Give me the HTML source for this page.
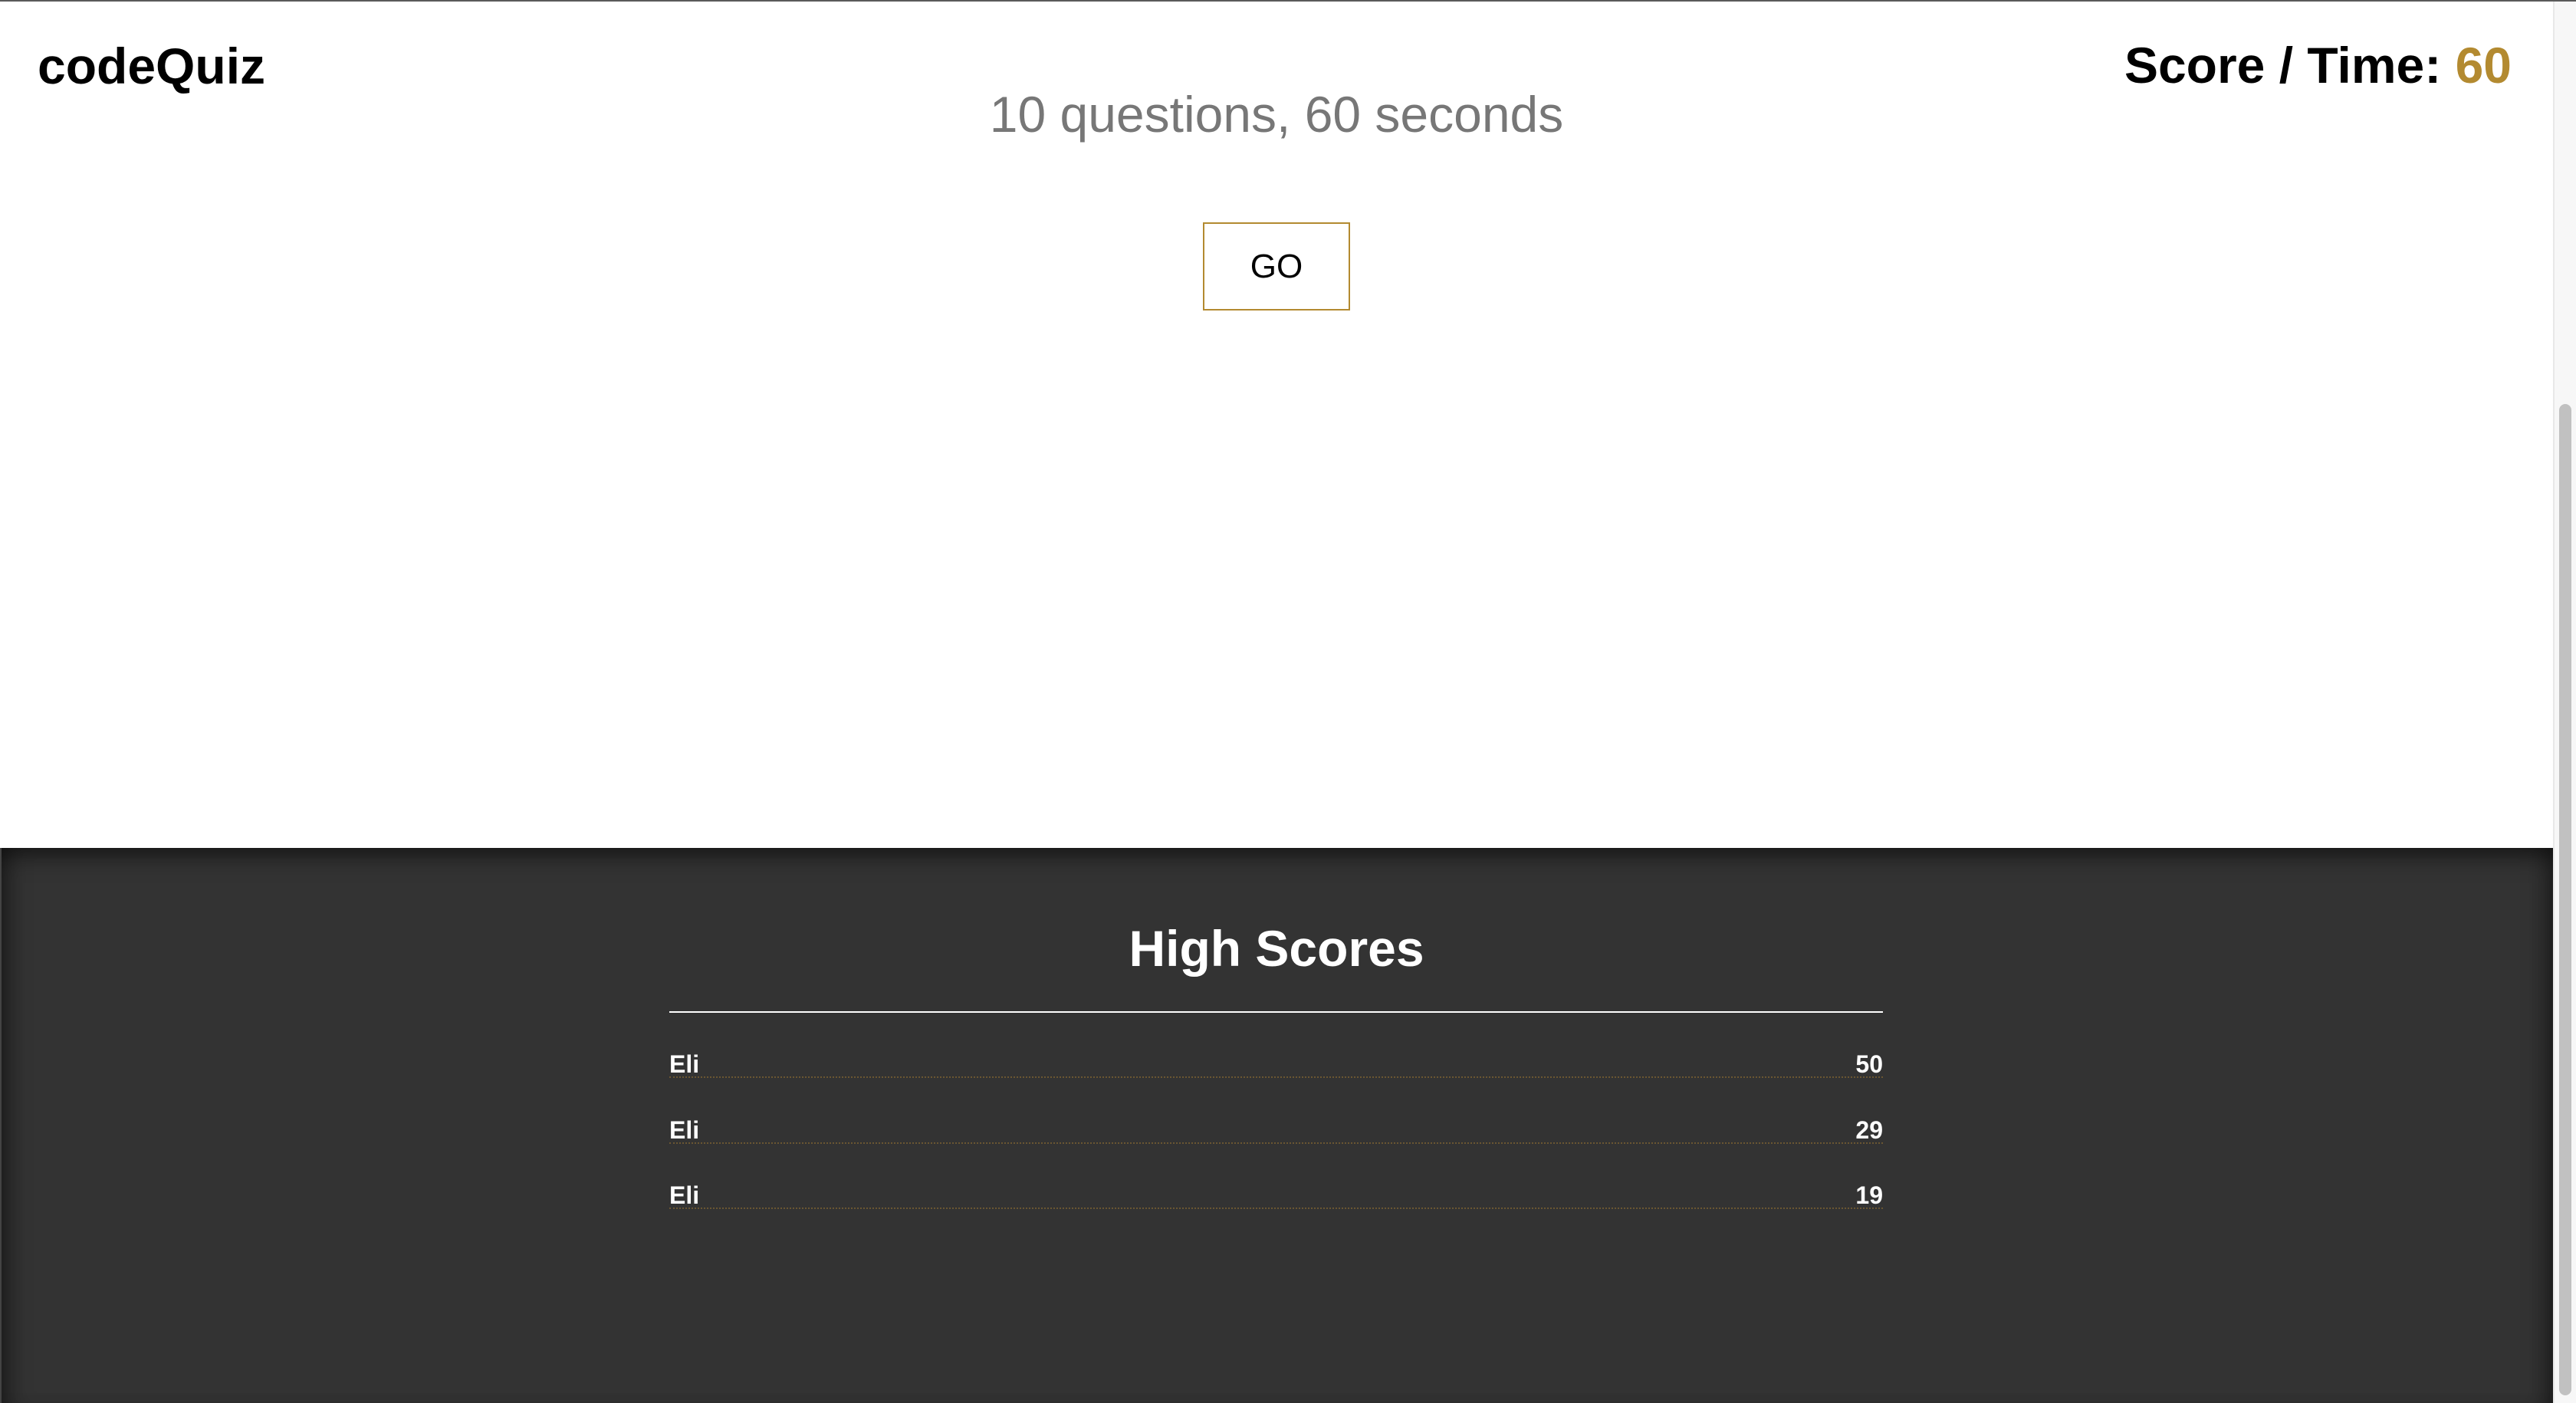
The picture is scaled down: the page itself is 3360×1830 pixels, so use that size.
<!DOCTYPE html>
<html><head><meta charset="utf-8"><style>
*{margin:0;padding:0;box-sizing:border-box}
html,body{width:3360px;height:1830px;overflow:hidden;background:#fff;font-family:"Liberation Sans",Arial,sans-serif}
.t{position:absolute;white-space:nowrap;line-height:1}
#topline{position:absolute;left:0;top:0;width:3360px;height:2px;background:#5a5a5a}
#sb{position:absolute;left:3330px;top:2px;width:30px;height:1828px;background:#f7f7f7;border-left:2px solid #e8e8e8}
#thumb{position:absolute;left:3338px;top:527px;width:16px;height:1293px;background:#c1c1c1;border-radius:8px}
#dark{position:absolute;left:0;top:1106px;width:3330px;height:724px;background:#333;box-shadow:inset 0 18px 30px -8px rgba(0,0,0,.55),inset 30px 0 30px -20px rgba(0,0,0,.35),inset -30px 0 30px -20px rgba(0,0,0,.35);border-left:2px solid #444}
#go{position:absolute;left:1569px;top:290px;width:192px;height:115px;border:2px solid #b38a30;background:#fff;font-size:44px;color:#000;text-align:center;line-height:111px}
.hr{position:absolute;left:873px;width:1583px;height:2px;background:#fff;top:1319px}
.row{position:absolute;left:873px;width:1583px;height:36px;border-bottom:2px dotted #6a5632;color:#fff;font-weight:bold;font-size:32px;line-height:36px}
.row span{float:right}
</style></head><body>
<div id="topline"></div>
<div class="t" style="left:49px;top:53px;font-size:66px;font-weight:bold;color:#000">codeQuiz</div>
<div class="t" style="right:84px;top:52px;font-size:66px;font-weight:bold;color:#000">Score / Time: <span style="color:#b38a30">60</span></div>
<div class="t" style="left:0;width:3330px;text-align:center;top:116px;font-size:66px;color:#777">10 questions, 60 seconds</div>
<div id="go">GO</div>
<div id="dark"></div>
<div class="t" style="left:0;width:3330px;text-align:center;top:1204px;font-size:66px;font-weight:bold;color:#fff">High Scores</div>
<div class="hr"></div>
<div class="row" style="top:1370px">Eli<span>50</span></div>
<div class="row" style="top:1456px">Eli<span>29</span></div>
<div class="row" style="top:1541px">Eli<span>19</span></div>
<div id="sb"></div>
<div id="thumb"></div>
</body></html>
